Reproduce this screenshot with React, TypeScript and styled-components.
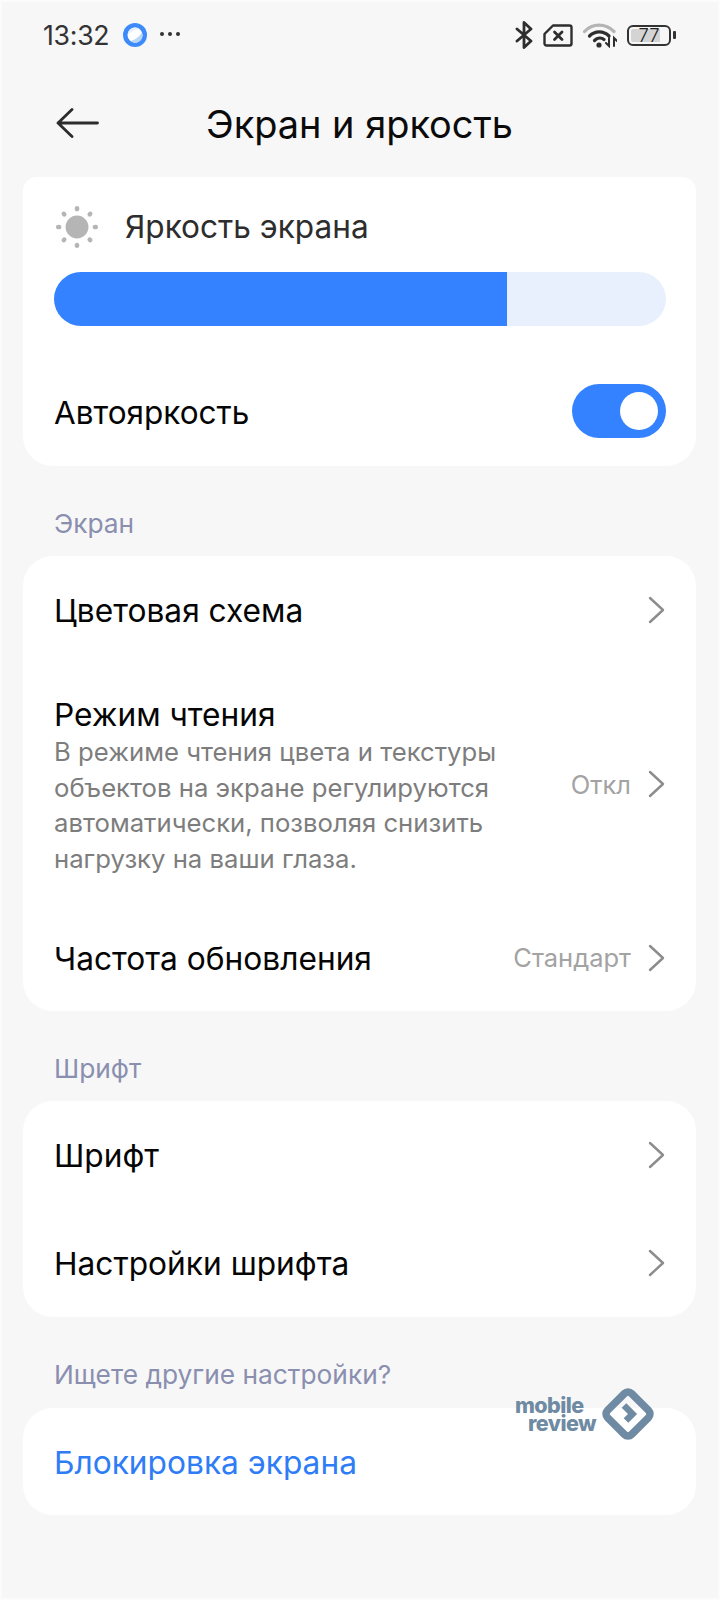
import React from "react";
import styled, { createGlobalStyle } from "styled-components";

const Global = createGlobalStyle`
  html, body { margin: 0; padding: 0; background: #f7f7f7; }
  body { font-family: "Inter", "Noto Sans", sans-serif; }
`;

const Page = styled.div`
  position: relative;
  width: 720px;
  height: 1600px;
  box-sizing: border-box;
  background: #f7f7f7;
  box-shadow: inset 0 0 0 2px #fcfcfc;
  overflow: hidden;
`;
const StatusBar = styled.div`
  height: 70px;
  box-sizing: border-box;
  padding: 0 44px 0 43px;
  display: flex;
  align-items: center;
  color: #333;
`;
const Clock = styled.span`
  font-size: 26.7px;
  letter-spacing: -0.3px;
  margin-right: 14px;
`;
const StatusRight = styled.div`
  margin-left: auto;
  display: flex;
  align-items: center;
  gap: 10px;
`;
const Battery = styled.div`
  position: relative;
  width: 44px;
  height: 21px;
  box-sizing: border-box;
  border: 2px solid #333;
  border-radius: 6px;
  display: flex;
  align-items: center;
  justify-content: center;
  font-size: 18.5px;
  font-weight: 300;
  color: #222;
  background: linear-gradient(90deg, #d4d4d4 0 77%, transparent 77%);
  background-clip: content-box;
  padding: 2px;
`;
const BatteryCap = styled.div`
  width: 3px;
  height: 8px;
  background: #333;
  border-radius: 1px;
  margin-left: -8px;
`;
const Header = styled.header`
  height: 107px;
  box-sizing: border-box;
  padding: 0 0 1px 56px;
  display: flex;
  align-items: center;
`;
const Title = styled.h1`
  margin: 3px 0 0 107px;
  font-weight: 400;
  font-size: 37.9px;
  color: #0b0b0b;
  line-height: 1;
`;
const Cards = styled.main`
  display: flex;
  flex-direction: column;
  padding: 0 24px 0 23px;
`;
const Card = styled.section<{ $flatTop?: boolean }>`
  background: #fff;
  border-radius: ${(p) => (p.$flatTop ? "14px 14px 30px 30px" : "30px")};
`;
const BrightnessHead = styled.div`
  height: 95px;
  box-sizing: border-box;
  padding: 4px 0 0 33px;
  display: flex;
  align-items: center;
  gap: 27px;
`;
const BrightnessLabel = styled.span`
  font-size: 31.6px;
  color: #2d2d2d;
`;
const Slider = styled.div`
  margin: 0 30px 0 31px;
  height: 54px;
  border-radius: 27px;
  background: #e8f0fd;
  overflow: hidden;
`;
const SliderFill = styled.div`
  height: 100%;
  background: #3482ff;
`;
const ToggleRow = styled.div`
  margin-top: 58px;
  padding: 0 30px 28px 31px;
  display: flex;
  align-items: center;
  justify-content: space-between;
`;
const ToggleLabel = styled.div`
  font-size: 31.5px;
  line-height: 38px;
  color: #050505;
  padding-top: 3px;
`;
const Toggle = styled.div`
  width: 94px;
  height: 54px;
  box-sizing: border-box;
  padding: 8px;
  border-radius: 27px;
  background: #3482ff;
  display: flex;
  justify-content: flex-end;
`;
const Knob = styled.div`
  width: 38px;
  height: 38px;
  border-radius: 50%;
  background: #fff;
`;
const SectionLabel = styled.div<{ $h: number; $pb: number }>`
  height: ${(p) => p.$h}px;
  box-sizing: border-box;
  padding: 0 0 ${(p) => p.$pb}px 31px;
  display: flex;
  align-items: flex-end;
  font-size: 26.3px;
  line-height: 30px;
  color: #8a8fb0;
`;
const Row = styled.div<{ $h: number }>`
  height: ${(p) => p.$h}px;
  box-sizing: border-box;
  padding: 0 31px;
  display: flex;
  align-items: center;
`;
const RowText = styled.div<{ $drop?: number }>`
  flex: 1;
  min-width: 0;
  padding-top: ${(p) => p.$drop ?? 2}px;
`;
const RowTitle = styled.div<{ $accent?: boolean }>`
  font-size: 31.7px;
  line-height: 38px;
  color: ${(p) => (p.$accent ? "#2f7df6" : "#050505")};
`;
const RowDesc = styled.div`
  font-size: 25.7px;
  line-height: 35.5px;
  color: #7d7d7d;
  white-space: pre-line;
`;
const RowValue = styled.span`
  font-size: 25.5px;
  color: #a3a3a3;
  margin-right: 17px;
`;
const Watermark = styled.div`
  position: absolute;
  left: 515px;
  top: 1386px;
  width: 141px;
  height: 56px;
  display: flex;
  align-items: center;
  color: #6f8aa3;
`;
const WatermarkText = styled.div`
  flex: 0 0 85px;
  font-weight: 800;
  font-size: 21.5px;
  line-height: 18px;
  letter-spacing: -0.6px;
`;
const WatermarkLine = styled.div<{ $indent?: boolean }>`
  padding-left: ${(p) => (p.$indent ? 13 : 0)}px;
`;

const Chevron = () => (
  <svg width="17" height="28" viewBox="0 0 17 28" fill="none" stroke="#8c8c8c" strokeWidth="2.4" strokeLinecap="round" strokeLinejoin="round">
    <path d="M2 2l13 12L2 26" />
  </svg>
);

const Back = () => (
  <svg width="43" height="30" viewBox="0 0 43 30" fill="none" stroke="#2c2c2c" strokeWidth="2.8" strokeLinecap="round" strokeLinejoin="round">
    <path d="M41.5 15H2M16 1.5L2 15l14 13.5" />
  </svg>
);

const Sun = () => (
  <svg width="42" height="42" viewBox="0 0 44 44" fill="#b5b5b5">
    <circle cx="22" cy="22" r="12" />
    {[0, 45, 90, 135, 180, 225, 270, 315].map((a) => (
      <ellipse key={a} cx="22" cy="2.8" rx="2.4" ry="2.8" transform={`rotate(${a} 22 22)`} />
    ))}
  </svg>
);

const AppDot = () => (
  <svg width="24" height="24" viewBox="0 0 24 24">
    <circle cx="12" cy="12" r="12" fill="#3d8bfa" />
    <circle cx="12" cy="12" r="7.5" fill="#fff" />
    <path d="M19 9.5A7.5 7.5 0 0 1 7 17.8C11 18 16 14 19 9.5Z" fill="#b9d6f5" />
    <path d="M4.8 12A7.5 7.5 0 0 1 17 6.3C13 6 8 8.5 4.8 12Z" fill="#e6f0fb" />
  </svg>
);

const Dots = styled.svg`
  width: 22px;
  height: 6px;
  margin: 0 0 2px 12px;
  fill: #333;
`;

const Bluetooth = () => (
  <svg width="18" height="28" viewBox="0 0 18 28" fill="none" stroke="#2e2e2e" strokeWidth="2.8" strokeLinejoin="round" strokeLinecap="round">
    <path d="M2 8l14 12-7 6.5V1.5L16 8 2 20" />
  </svg>
);

const Sim = () => (
  <svg width="30" height="23" viewBox="0 0 30 23" fill="none" stroke="#2e2e2e" strokeWidth="2.4" strokeLinejoin="round" strokeLinecap="round">
    <path d="M10 1.5h16.5a2 2 0 0 1 2 2v16a2 2 0 0 1-2 2h-23a2 2 0 0 1-2-2V10Z" />
    <path d="M11.5 8l7.5 7.5M19 8l-7.5 7.5" strokeWidth="2.8" />
  </svg>
);

const Wifi = () => (
  <svg width="34" height="26" viewBox="0 0 34 26" fill="none" strokeLinecap="round">
    <path d="M1.5 9.5C9.5 1 22.5 1 31 9.5" stroke="#b4b4b4" strokeWidth="3.2" />
    <path d="M6.5 14C12 8.5 20.5 8.5 26 14" stroke="#2e2e2e" strokeWidth="3.2" />
    <path d="M11.5 18.5C14.5 15.5 18.5 15.5 21 17.5" stroke="#2e2e2e" strokeWidth="3.2" />
    <circle cx="16" cy="23" r="2.6" fill="#2e2e2e" />
    <path d="M26 16v8l-3-3M31 24v-8l3 3" stroke="#2e2e2e" strokeWidth="2" />
  </svg>
);

const Logo = () => (
  <svg width="56" height="56" viewBox="0 0 56 56" fill="none" stroke="#6f8aa3">
    <rect x="11" y="11" width="34" height="34" rx="5" strokeWidth="7.5" transform="rotate(45 28 28)" />
    <path d="M24 19.5l8.5 8.5-6.5 6.5" strokeWidth="6.5" strokeLinejoin="miter" />
  </svg>
);

export default function App() {
  return (
    <Page>
      <Global />
      <StatusBar>
        <Clock>13:32</Clock>
        <AppDot />
        <Dots viewBox="0 0 22 6">
          <circle cx="3" cy="3" r="2" />
          <circle cx="11" cy="3" r="2" />
          <circle cx="19" cy="3" r="2" />
        </Dots>
        <StatusRight>
          <Bluetooth />
          <Sim />
          <Wifi />
          <Battery>77</Battery>
          <BatteryCap />
        </StatusRight>
      </StatusBar>
      <Header>
        <Back />
        <Title>Экран и яркость</Title>
      </Header>
      <Cards>
        <Card $flatTop>
          <BrightnessHead>
            <Sun />
            <BrightnessLabel>Яркость экрана</BrightnessLabel>
          </BrightnessHead>
          <Slider>
            <SliderFill style={{ width: "74%" }} />
          </Slider>
          <ToggleRow>
            <ToggleLabel>Автояркость</ToggleLabel>
            <Toggle>
              <Knob />
            </Toggle>
          </ToggleRow>
        </Card>
        <SectionLabel $h={90} $pb={17}>Экран</SectionLabel>
        <Card>
          <Row $h={108}>
            <RowText>
              <RowTitle>Цветовая схема</RowTitle>
            </RowText>
            <Chevron />
          </Row>
          <Row $h={240}>
            <RowText $drop={4}>
              <RowTitle>Режим чтения</RowTitle>
              <RowDesc>{"В режиме чтения цвета и текстуры\nобъектов на экране регулируются\nавтоматически, позволяя снизить\nнагрузку на ваши глаза."}</RowDesc>
            </RowText>
            <RowValue>Откл</RowValue>
            <Chevron />
          </Row>
          <Row $h={107}>
            <RowText>
              <RowTitle>Частота обновления</RowTitle>
            </RowText>
            <RowValue>Стандарт</RowValue>
            <Chevron />
          </Row>
        </Card>
        <SectionLabel $h={90} $pb={17}>Шрифт</SectionLabel>
        <Card>
          <Row $h={108}>
            <RowText>
              <RowTitle>Шрифт</RowTitle>
            </RowText>
            <Chevron />
          </Row>
          <Row $h={108}>
            <RowText>
              <RowTitle>Настройки шрифта</RowTitle>
            </RowText>
            <Chevron />
          </Row>
        </Card>
        <SectionLabel $h={91} $pb={18}>Ищете другие настройки?</SectionLabel>
        <Card>
          <Row $h={107}>
            <RowText>
              <RowTitle $accent>Блокировка экрана</RowTitle>
            </RowText>
          </Row>
        </Card>
      </Cards>
      <Watermark>
        <WatermarkText>
          <WatermarkLine>mobile</WatermarkLine>
          <WatermarkLine $indent>review</WatermarkLine>
        </WatermarkText>
        <Logo />
      </Watermark>
    </Page>
  );
}
